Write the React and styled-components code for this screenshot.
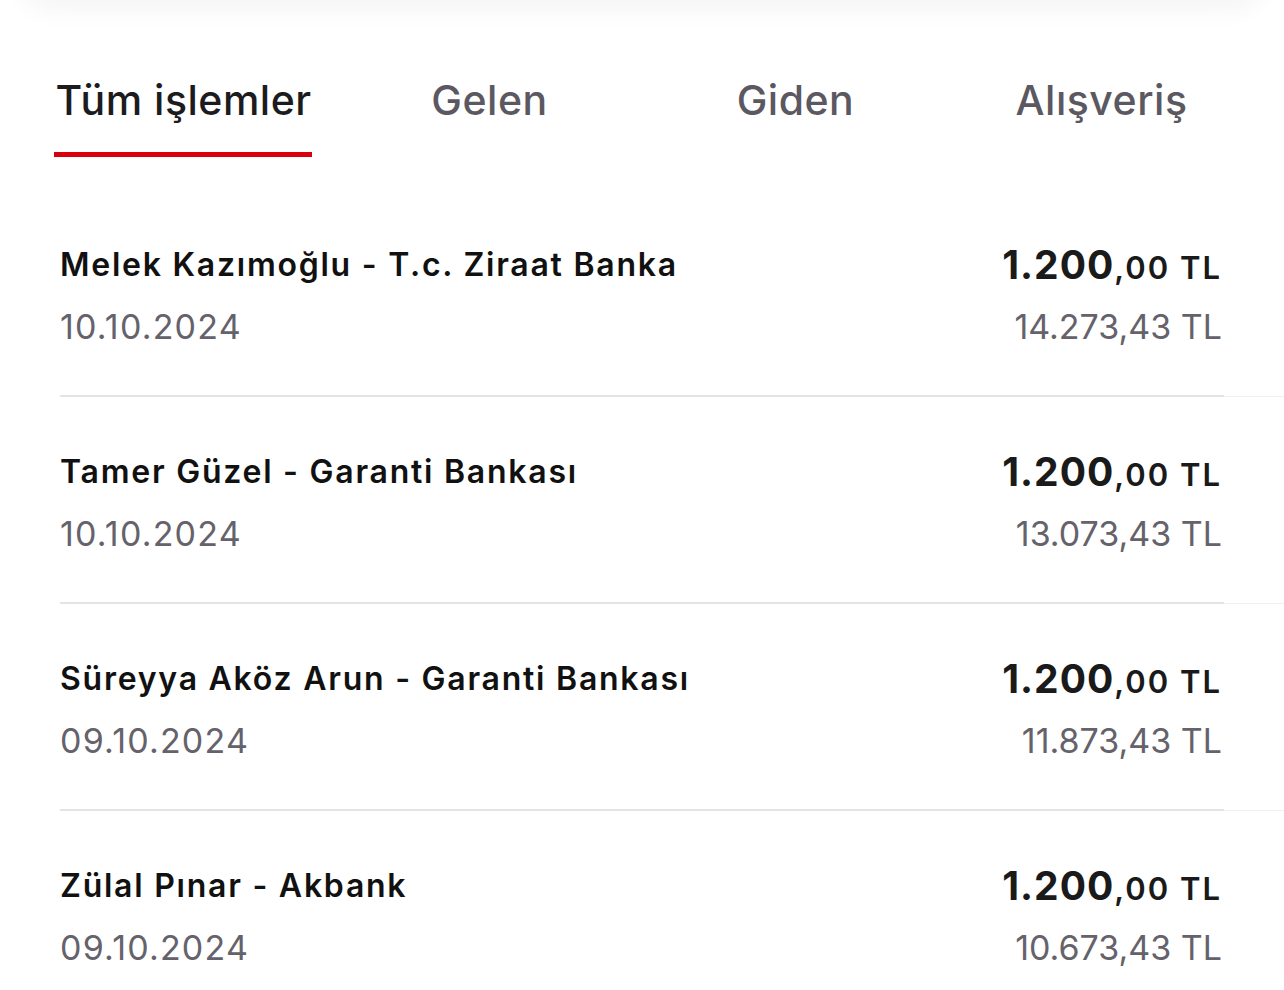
import React, { useState } from "react";
import styled, { createGlobalStyle } from "styled-components";

const GlobalStyle = createGlobalStyle`
  html, body {
    margin: 0;
    padding: 0;
    background: #ffffff;
    font-family: Inter, "Noto Sans", sans-serif;
    -webkit-font-smoothing: antialiased;
  }
`;

const Page = styled.div`
  width: 1284px;
  min-height: 990px;
  background: #ffffff;
  overflow: hidden;
`;

const TopCard = styled.div`
  height: 60px;
  margin: -60px 22px 0;
  border-radius: 28px;
  background: #ffffff;
  box-shadow: 0 10px 26px rgba(0, 0, 0, 0.045);
`;

const TabBar = styled.div`
  display: grid;
  grid-template-columns: repeat(4, 1fr);
  padding: 76px 30px 0;
  margin-bottom: 33px;
`;

const Tab = styled.button`
  justify-self: center;
  border: 0;
  background: none;
  padding: 0;
  cursor: pointer;
  font-family: inherit;
`;

const TabLabel = styled.span`
  display: inline-block;
  padding: 0 0 28px 1px;
  font-size: 41px;
  line-height: 48px;
  font-weight: 500;
  letter-spacing: 0.5px;
  color: ${(p) => (p.$active ? "#1c1c1e" : "#5b5861")};
  border-bottom: 5px solid ${(p) => (p.$active ? "#d9000d" : "transparent")};
`;

const List = styled.div`
  margin-left: 60px;
`;

const RowOuter = styled.div`
  border-bottom: 1px solid #f0f0f0;
`;

const Row = styled.div`
  display: flex;
  justify-content: space-between;
  margin: 0 60px -1px 0;
  padding: 55px 0 48px;
  border-bottom: 2px solid #e4e4e4;
`;

const Col = styled.div`
  display: flex;
  flex-direction: column;
  gap: 22px;
  align-items: ${(p) => (p.$right ? "flex-end" : "flex-start")};
  padding-right: ${(p) => (p.$right ? "2px" : "0")};
`;

const Title = styled.div`
  font-size: 32px;
  line-height: 40px;
  font-weight: 600;
  letter-spacing: 1.75px;
  color: #111111;
  white-space: nowrap;
`;

const Sub = styled.div`
  font-size: 34px;
  line-height: 40px;
  height: 40px;
  font-weight: 400;
  color: #65626b;
  letter-spacing: ${(p) => (p.$wide ? "1.2px" : "0")};
  white-space: nowrap;
`;

const Amount = styled.div`
  height: 40px;
  line-height: 40px;
  color: #1a1a1a;
  white-space: nowrap;
`;

const AmountMain = styled.span`
  font-size: 39px;
  line-height: 1;
  font-weight: 700;
  letter-spacing: 1px;
`;

const AmountRest = styled.span`
  font-size: 31px;
  line-height: 1;
  font-weight: 600;
  letter-spacing: 2px;
`;

const tabs = ["Tüm işlemler", "Gelen", "Giden", "Alışveriş"];

const islemler = [
  { id: 1, ad: "Melek Kazımoğlu - T.c. Ziraat Banka", tarih: "10.10.2024", bakiye: "14.273,43 TL" },
  { id: 2, ad: "Tamer Güzel - Garanti Bankası", tarih: "10.10.2024", bakiye: "13.073,43 TL" },
  { id: 3, ad: "Süreyya Aköz Arun - Garanti Bankası", tarih: "09.10.2024", bakiye: "11.873,43 TL" },
  { id: 4, ad: "Zülal Pınar - Akbank", tarih: "09.10.2024", bakiye: "10.673,43 TL" },
];

export default function App() {
  const [aktif, setAktif] = useState(0);

  return (
    <Page>
      <GlobalStyle />
      <TopCard />
      <TabBar>
        {tabs.map((t, i) => (
          <Tab key={t} onClick={() => setAktif(i)}>
            <TabLabel $active={aktif === i}>{t}</TabLabel>
          </Tab>
        ))}
      </TabBar>

      <List>
        {islemler.map((islem) => (
          <RowOuter key={islem.id}>
            <Row>
              <Col>
                <Title>{islem.ad}</Title>
                <Sub $wide>{islem.tarih}</Sub>
              </Col>
              <Col $right>
                <Amount>
                  <AmountMain>1.200</AmountMain>
                  <AmountRest>,00 TL</AmountRest>
                </Amount>
                <Sub>{islem.bakiye}</Sub>
              </Col>
            </Row>
          </RowOuter>
        ))}
      </List>
    </Page>
  );
}
